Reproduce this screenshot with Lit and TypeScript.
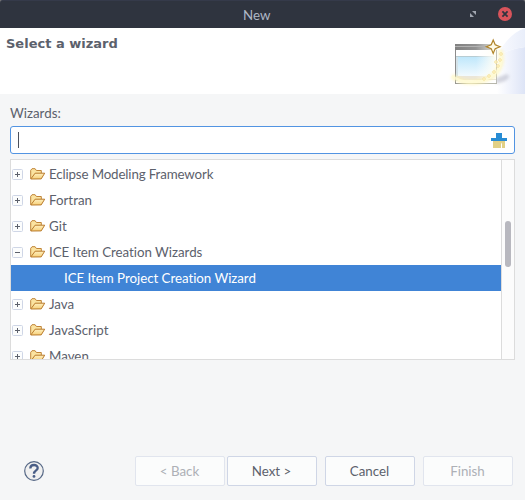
import { LitElement, html, css, svg } from "lit";
import { customElement, property, state } from "lit/decorators.js";
import { classMap } from "lit/directives/class-map.js";
import { styleMap } from "lit/directives/style-map.js";

interface Category {
  name: string;
  tracking?: number;
  wizards?: string[];
}

const categories: Category[] = [
  { name: "Eclipse Modeling Framework", tracking: -0.14 },
  { name: "Fortran" },
  { name: "Git" },
  { name: "ICE Item Creation Wizards", tracking: -0.03, wizards: ["ICE Item Project Creation Wizard"] },
  { name: "Java" },
  { name: "JavaScript", tracking: 0.08 },
  { name: "Maven" },
];

@customElement("wizard-banner")
class WizardBanner extends LitElement {
  static styles = css`
    :host { display: flex; justify-content: space-between; height: 66px; background: #fff; }
    h1 { margin: 8px 0 0 6px; font: bold 13px/16px "DejaVu Sans", sans-serif; color: #5c616c; }
    svg { display: block; }
  `;
  render() {
    const stars = [[484, 79], [489, 76], [494, 72], [498, 66], [500, 60], [501, 54], [496, 62]];
    return html`
      <h1>Select a wizard</h1>
      <svg width="79" height="66" viewBox="446 28 79 66">
        <defs>
          <linearGradient id="sweep" x1="0" y1="0" x2="1" y2="0">
            <stop offset="0" stop-color="#fff" />
            <stop offset="0.45" stop-color="#f0f3fc" />
            <stop offset="1" stop-color="#dde4f6" />
          </linearGradient>
          <linearGradient id="beam" x1="0" y1="0" x2="1" y2="0">
            <stop offset="0" stop-color="#fafbff" />
            <stop offset="1" stop-color="#e9eefa" />
          </linearGradient>
          <linearGradient id="bar" x1="0" y1="0" x2="1" y2="0">
            <stop offset="0" stop-color="#808080" />
            <stop offset="0.5" stop-color="#929292" />
            <stop offset="0.85" stop-color="#cfcfca" />
            <stop offset="1" stop-color="#eeeede" />
          </linearGradient>
          <linearGradient id="edge" x1="0" y1="0" x2="1" y2="0">
            <stop offset="0" stop-color="#8f8f8f" />
            <stop offset="0.3" stop-color="#c9c8b4" />
            <stop offset="1" stop-color="#b5b5aa" />
          </linearGradient>
          <linearGradient id="pane" x1="0" y1="0" x2="0" y2="1">
            <stop offset="0" stop-color="#bfe7fb" />
            <stop offset="1" stop-color="#f2fafe" />
          </linearGradient>
          <linearGradient id="fade" x1="0" y1="0" x2="1" y2="0">
            <stop offset="0" stop-color="#fff" stop-opacity="0" />
            <stop offset="1" stop-color="#fffef4" />
          </linearGradient>
          <filter id="soft" x="-40%" y="-40%" width="180%" height="180%"><feGaussianBlur stdDeviation="1.4" /></filter>
        </defs>
        <path d="M497 94 V56 Q509 49 525 47 V94Z" fill="url(#sweep)" />
        <path d="M497 56 Q508 34 525 28 V47 Q509 49 497 56Z" fill="url(#beam)" />
        <path d="M496 84 V78 L507 74 Q512 77 505 81Z" fill="#b3b5c4" opacity="0.55" filter="url(#soft)" />
        <rect x="455.5" y="44.5" width="41" height="39" fill="#fff" stroke="#bdbdb8" />
        <rect x="455" y="50" width="1" height="34" fill="#8c8c8c" />
        <rect x="455" y="44" width="42" height="6" fill="url(#bar)" />
        <rect x="455" y="46" width="34" height="1" fill="#b2b2b2" />
        <rect x="456" y="56" width="38" height="1" fill="#b7ccd3" />
        <rect x="456" y="57" width="2" height="24" fill="#d5e3e9" />
        <rect x="458" y="57" width="37" height="19" fill="url(#pane)" />
        <rect x="457" y="76" width="39" height="4" fill="#ebe6d8" />
        <rect x="455" y="83" width="42" height="1" fill="url(#edge)" />
        <rect x="476" y="50" width="20" height="29" fill="url(#fade)" />
        <path d="M452 76 C462 84 479 84 491 77 C501 70 503 60 500 50" fill="none" stroke="#fff3a8" stroke-width="5" opacity="0.6" filter="url(#soft)" />
        <path d="M452 76 C462 84 479 84 491 77 C501 70 503 60 500 50" fill="none" stroke="#fffbd8" stroke-width="2.4" opacity="0.75" />
        ${stars.map(([x, y]) => svg`<path transform="translate(${x} ${y})" d="M0 -2 L.6 -.6 L2 0 L.6 .6 L0 2 L-.6 .6 L-2 0 L-.6 -.6Z" fill="#fff3c0" stroke="#f5e3a2" stroke-width=".7" />`)}
        <path d="M493.2 40 L495.2 44.8 L500 46.7 L495.2 48.6 L493.2 53.5 L491.2 48.6 L486.4 46.7 L491.2 44.8Z" fill="#fffbe7" stroke="#b18429" stroke-width="1.2" />
      </svg>
    `;
  }
}

@customElement("wizard-tree")
class WizardTree extends LitElement {
  @property({ attribute: false }) items: Category[] = [];
  @state() private selected = "ICE Item Project Creation Wizard";

  static styles = css`
    :host { display: flex; box-sizing: border-box; height: 201px; border: 1px solid #dcdcdc; background: #fff; overflow: hidden; }
    .rows { flex: 1; padding-top: 1px; overflow: hidden; }
    .row { display: flex; align-items: center; height: 26px; padding-left: 1px; white-space: nowrap; }
    .toggle { margin-right: 7px; }
    .folder { margin-right: 3px; }
    svg { display: block; flex: none; }
    .leaf { padding-left: 53px; letter-spacing: -0.04px; }
    .leaf.selected { background: #4084d6; color: #fff; }
    .track { box-sizing: border-box; width: 13px; border-left: 1px solid #dcdcdc; background: #fcfcfc; padding: 61px 3px 0; }
    .thumb { width: 6px; height: 46px; border-radius: 3px; background: #b8b8bf; }
  `;

  private folder() {
    return html`<svg class="folder" width="16" height="16" viewBox="0 0 16 16">
      <defs><linearGradient id="f" x1="0" y1="0" x2="0" y2="1"><stop offset="0" stop-color="#fff0c0" /><stop offset="1" stop-color="#f6cf78" /></linearGradient></defs>
      <path d="M.7 12.8 V4.3 L2 2.7 H5.1 L6.4 4.5 H11.3 V7" fill="#fbe3a0" stroke="#c08437" />
      <path d="M.8 13 L5.1 7.2 H14.7 L11.2 12.9Z" fill="url(#f)" stroke="#b97a2b" stroke-linejoin="round" />
    </svg>`;
  }

  render() {
    return html`
      <div class="rows">
        ${this.items.map((c) => html`
          <div class="row">
            <svg class="toggle" width="11" height="11" viewBox="0 0 11 11">
              <rect x=".5" y=".5" width="10" height="10" rx="1" fill="#fcfdfd" stroke="#cfd6e6" />
              <path d=${c.wizards ? "M3 5.5H8" : "M3 5.5H8M5.5 3V8"} stroke="#5c616c" />
            </svg>
            ${this.folder()}<span style=${styleMap({ letterSpacing: `${c.tracking ?? 0}px` })}>${c.name}</span>
          </div>
          ${(c.wizards ?? []).map((w) => html`
            <div class=${classMap({ row: true, leaf: true, selected: w === this.selected })} @click=${() => (this.selected = w)}><span>${w}</span></div>`)}
        `)}
      </div>
      <div class="track"><div class="thumb"></div></div>
    `;
  }
}

@customElement("app-root")
class AppRoot extends LitElement {
  static styles = css`
    :host { display: flex; flex-direction: column; width: 525px; height: 500px; overflow: hidden; background: #f5f6f7; color: #5c616c; font: 13.33px/18px Lato, "Liberation Sans", sans-serif; font-variant-ligatures: none; cursor: default; }
    svg { display: block; flex: none; }
    .frame { background: #777; }
    .titlebar { display: flex; align-items: center; box-sizing: border-box; height: 28px; padding: 0 13px 0 243px; border-top: 1px solid #353a4a; border-radius: 3px 3px 0 0; background: #2f343f; color: #afb8c6; }
    .controls { display: flex; align-items: center; gap: 22px; margin: 0 0 1px auto; }
    .content { padding: 10px 10px 0; }
    .field { display: flex; align-items: center; justify-content: space-between; box-sizing: border-box; height: 28px; margin: 4px 0 5px; padding: 0 7px; border: 1px solid #5294e2; border-radius: 3px; background: #fff; }
    .caret { width: 1px; height: 16px; background: #4c515c; }
    .footer { display: flex; align-items: center; margin-top: auto; height: 30px; padding: 0 12px 14px 24px; }
    .buttons { display: flex; margin-left: auto; gap: 8px; }
    .pair { display: flex; gap: 2px; }
    button { box-sizing: border-box; width: 90px; height: 30px; padding: 0 1px 0 0; border: 1px solid #cfd6e6; border-radius: 2px; background: #fbfcfc; color: #5c616c; font: inherit; }
    button:disabled { border-color: #e1e5ee; color: #adb0b6; }
  `;

  render() {
    return html`
      <div class="frame"><div class="titlebar">
        <span>New</span>
        <div class="controls">
          <svg width="6" height="6" viewBox="0 0 6 6" fill="#a1a6b0"><path d="M2 0H6V4ZM0 2V6H4Z" /></svg>
          <svg width="14" height="14" viewBox="0 0 14 14"><circle cx="7" cy="7" r="7" fill="#d9545b" /><path d="M4.4 4.4L9.6 9.6M9.6 4.4L4.4 9.6" stroke="#2f343f" stroke-width="1.8" /></svg>
        </div>
      </div></div>
      <wizard-banner></wizard-banner>
      <div class="content">
        <div>Wizards:</div>
        <div class="field">
          <div class="caret"></div>
          <svg width="16" height="16" viewBox="0 0 16 16">
            <path d="M5 1H11V6H16V9H0V6H5Z" fill="#288cd4" />
            <path d="M2 9H14V16H2Z" fill="#e1d086" />
            <path d="M10 16V12L11 10.5V16Z" fill="#fff" />
          </svg>
        </div>
        <wizard-tree .items=${categories}></wizard-tree>
      </div>
      <div class="footer">
        <svg width="20" height="20" viewBox="0 0 20 20">
          <circle cx="10" cy="10" r="9.3" fill="#f0f0f0" stroke="#566886" stroke-width="1.2" />
          <path d="M6.3 7.5C6.3 2.8 13.7 3 13.7 7C13.7 9.6 10 9.2 10 12.8" fill="none" stroke="#495d86" stroke-width="2.3" />
          <circle cx="10" cy="15.4" r="1.4" fill="#495d86" />
        </svg>
        <div class="buttons">
          <div class="pair"><button disabled>&lt; Back</button><button>Next &gt;</button></div>
          <button>Cancel</button>
          <button disabled>Finish</button>
        </div>
      </div>
    `;
  }
}
